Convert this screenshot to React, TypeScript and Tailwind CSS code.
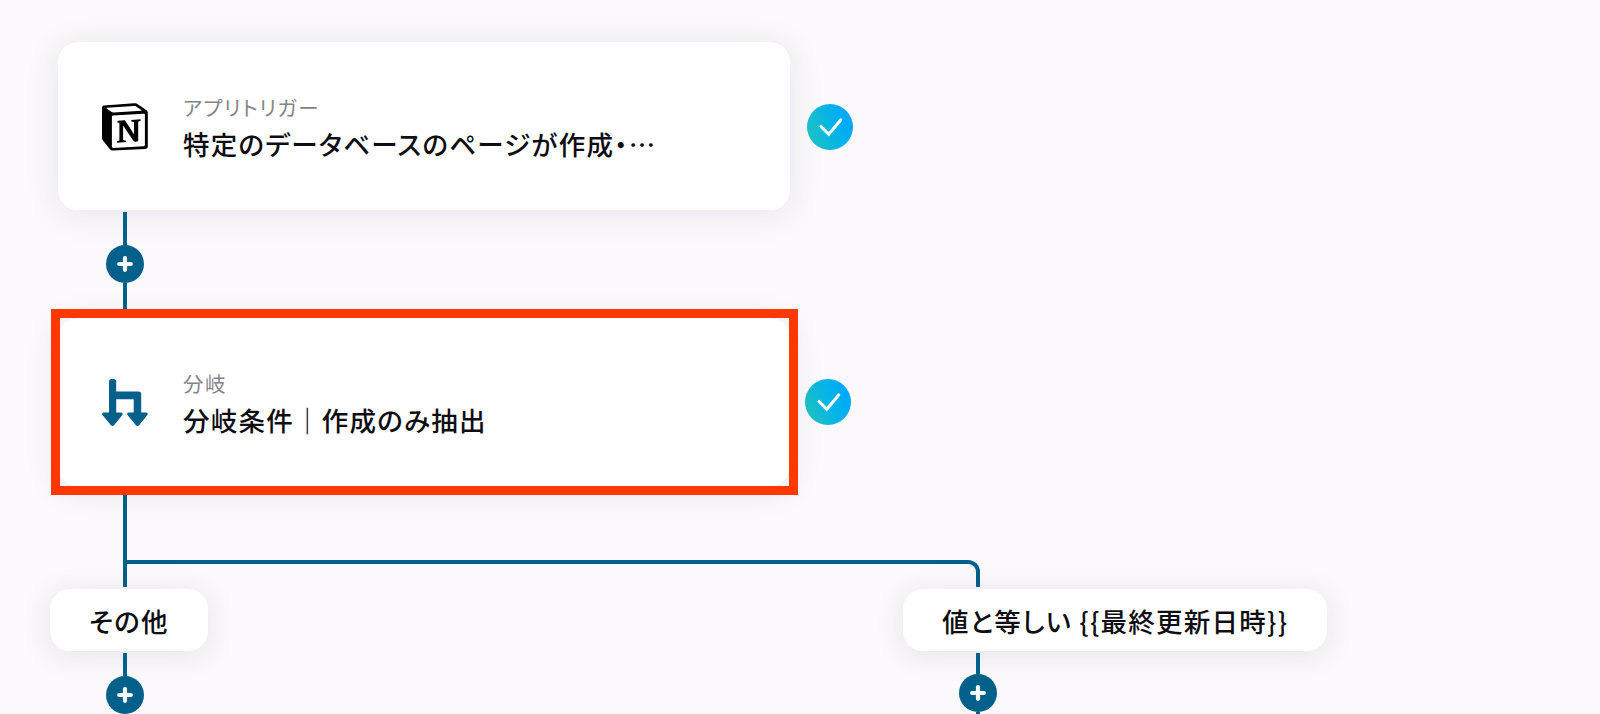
import type { ReactNode } from "react";
import clsx from "clsx";

interface StepCardProps {
  icon: ReactNode;
  label: string;
  title: string;
}

function NotionIcon() {
  return (
    <svg viewBox="0 0 46 48" className="mt-0.5 h-[48px] w-[46px]">
      <path
        d="M2 2.400 32 .2c1.600-.1 2.600.1 3.800 1l8.300 5.900c1.100.8 1.700 1.500 1.700 2.700v33.400c0 1.700-.8 2.700-2.700 2.800L11 47.600c-1.500.1-2.300-.2-3.100-1.300L1.400 38C.4 36.700 0 35.900 0 34.700V5C0 3.500.6 2.500 2 2.400Z"
        fill="#000"
      />
      <path d="M5 4.800 31.800 3c1-.1 1.500 0 2.300.5l5.200 3.600c.5.4.3.7-.3.700L11.800 9.500c-1.200.1-1.800-.1-2.500-.7L4.700 5.500c-.4-.3-.3-.6.3-.7Z" fill="#fff" />
      <path d="M11 12.600 41.600 10.700c.9-.1 1.300.4 1.300 1.200V41.800c0 .9-.4 1.300-1.300 1.400l-30.300 1.700c-.9 0-1.400-.4-1.400-1.300V13.900c0-.8.3-1.200 1.100-1.300Z" fill="#fff" />
      <path
        d="M15.600 17.800 22.900 17.300 32 31.300V18.900L29.300 18.400V16.900L38.600 16.300V17.700L36.200 18.700V38.100C34.300 38.900 32.300 39 31.200 37.400L21.100 22.400V36.900L24 37.700V39.100L15 39.700V38.300L17.400 37.500V20.100L15.300 19.600Z"
        fill="#000"
      />
    </svg>
  );
}

function BranchIcon() {
  return (
    <svg viewBox="0 0 46 48" className="mt-px h-[48px] w-[46px]" fill="#02608a">
      <path d="M7 2.500Q7 0 9.500 0h2.200Q14.200 0 14.200 2.500V12.500H36.500Q39.200 12.500 39.200 15V33.500H44.200Q46.600 34.200 45.300 36L37.300 46Q35.500 48.200 33.700 46L25.500 36Q24.500 34.200 26.500 33.500H31.700V20.200H14.200V33.500H19.200Q21.500 34.200 20.300 36L12.300 46Q10.500 48.200 8.700 46L.5 36Q-.6 34.200 1.500 33.500H7Z" />
    </svg>
  );
}

function DoneBadge({ className }: { className?: string }) {
  return (
    <div
      className={clsx(
        "flex size-[46px] items-center justify-center rounded-full bg-linear-70 from-[#20c4c0] from-5% to-[#00aaf8] to-80%",
        className,
      )}
    >
      <svg viewBox="0 0 46 46" className="size-[46px]">
        <path d="M14 22.500 21.800 30.300 33.700 16" fill="none" stroke="#fff" strokeWidth="3.100" strokeLinecap="round" />
      </svg>
    </div>
  );
}

function AddButton() {
  return (
    <button type="button" className="flex size-[38px] shrink-0 items-center justify-center rounded-full bg-[#02608a]">
      <svg viewBox="0 0 16 16" className="size-4">
        <path d="M8 2.200v11.600M2.200 8h11.600" stroke="#fff" strokeWidth="4.200" strokeLinecap="round" />
      </svg>
    </button>
  );
}

function StepCard({ icon, label, title }: StepCardProps) {
  return (
    <div className="flex h-[168px] w-[732px] items-center rounded-[20px] bg-white pl-[44px] shadow-[0_4px_36px_rgba(40,30,50,0.09)]">
      {icon}
      <div className="ml-[35px] flex flex-col pt-[3px]">
        <span className="text-[20.500px] leading-[30px] font-normal tracking-[1.400px] text-[#858388]">{label}</span>
        <span className="mt-[3px] text-[26.500px] leading-[38px] font-medium tracking-[1.250px]">{title}</span>
      </div>
    </div>
  );
}

function BranchLabel({ children }: { children: string }) {
  return (
    <div className="flex h-[62px] items-center rounded-[20px] bg-white pt-0.5 pr-[39px] pl-[39px] text-[26.500px] font-medium tracking-[1.250px] whitespace-pre shadow-[0_4px_30px_rgba(40,30,50,0.10)]">
      {children}
    </div>
  );
}

export default function App() {
  return (
    <main className="h-[714px] w-[1600px] overflow-hidden bg-[#fbf9fc] pt-[42px] font-['Noto_Sans_CJK_JP',sans-serif] text-[#0e0e12] [font-feature-settings:'palt']">
      <div className="ml-[58px] flex items-center gap-[17px]">
        <StepCard icon={<NotionIcon />} label="アプリトリガー" title="特定のデータベースのページが作成・…" />
        <DoneBadge className="mt-0.5" />
      </div>

      <div className="ml-[106px] flex h-[99px] w-[38px] flex-col items-center pt-[2px]">
        <div className="h-[33px] w-1 bg-[#02608a]" />
        <AddButton />
        <div className="w-1 grow bg-[#02608a]" />
      </div>

      {/* highlighted step */}
      <div className="ml-[51px] flex items-center gap-[7px]">
        <div className="relative h-[186px] w-[747px] pt-[9px] pl-[7px]">
          <StepCard icon={<BranchIcon />} label="分岐" title="分岐条件｜作成のみ抽出" />
          <div className="absolute inset-0 border-[9px] border-[#ff3800]" />
        </div>
        <DoneBadge />
      </div>

      <div className="ml-[123px] flex h-[94px]">
        <div className="h-[92px] w-1 bg-[#02608a]" />
        <div className="mt-[65px] h-[27px] w-[853px] rounded-tr-[12px] border-t-4 border-r-4 border-[#02608a]" />
      </div>

      <div className="flex">
        <div className="ml-[50px] w-[853px]">
          <div className="flex">
            <BranchLabel>その他</BranchLabel>
          </div>
          <div className="ml-[56px] flex w-[38px] flex-col items-center pt-[2px]">
            <div className="h-[23px] w-1 bg-[#02608a]" />
            <AddButton />
          </div>
        </div>
        <div>
          <BranchLabel>{"値と等しい {{最終更新日時}}"}</BranchLabel>
          <div className="ml-[56px] flex w-[38px] flex-col items-center pt-[2px]">
            <div className="h-[21px] w-1 bg-[#02608a]" />
            <AddButton />
            <div className="h-4 w-1 bg-[#02608a]" />
          </div>
        </div>
      </div>
    </main>
  );
}
